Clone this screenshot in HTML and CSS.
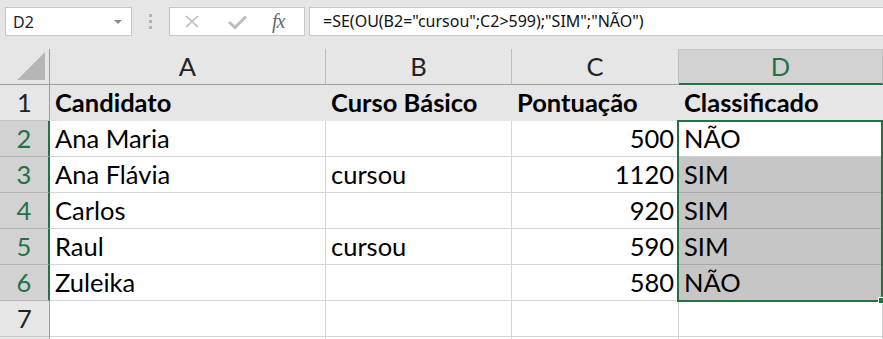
FILE: index.html
```html
<!DOCTYPE html>
<html lang="pt">
<head>
    <meta charset="UTF-8">
    <title>Planilha</title>
    <link rel="stylesheet" href="styles.css">
</head>
<body>
    <div class="toolbar">
        <div class="namebox"><span>D2</span><span class="caret"></span></div>
        <div class="grip"><i></i><i></i><i></i></div>
        <div class="fxbuttons">
            <svg class="ico" width="18" height="13" viewBox="0 0 18 13"><path d="M3 1 L15 12 M15 1 L3 12" stroke="#b9b9b9" stroke-width="1.6" fill="none"/></svg>
            <svg class="ico" width="19" height="14" viewBox="0 0 19 14"><path d="M1 7 L7 12.5 L18 1.5" stroke="#bcbcbc" stroke-width="3" fill="none"/></svg>
            <span class="fx">fx</span>
        </div>
        <div class="formula">=SE(OU(B2="cursou";C2&gt;599);"SIM";"NÃO")</div>
    </div>

    <div class="sheet">
        <div class="grid">
            <div class="corner"><svg width="30" height="30" viewBox="0 0 30 30"><polygon points="29,1 29,29 1,29" fill="#b5b5b5"/></svg></div>
            <div class="colhead">A</div>
            <div class="colhead">B</div>
            <div class="colhead">C</div>
            <div class="colhead active">D</div>

            <div class="rowhead">1</div>
            <div class="cell title">Candidato</div>
            <div class="cell title">Curso Básico</div>
            <div class="cell title">Pontuação</div>
            <div class="cell title">Classificado</div>

            <div class="rowhead active">2</div>
            <div class="cell">Ana Maria</div>
            <div class="cell"></div>
            <div class="cell num">500</div>
            <div class="cell current">NÃO</div>

            <div class="rowhead active">3</div>
            <div class="cell">Ana Flávia</div>
            <div class="cell">cursou</div>
            <div class="cell num">1120</div>
            <div class="cell picked">SIM</div>

            <div class="rowhead active">4</div>
            <div class="cell">Carlos</div>
            <div class="cell"></div>
            <div class="cell num">920</div>
            <div class="cell picked">SIM</div>

            <div class="rowhead active">5</div>
            <div class="cell">Raul</div>
            <div class="cell">cursou</div>
            <div class="cell num">590</div>
            <div class="cell picked">SIM</div>

            <div class="rowhead active">6</div>
            <div class="cell">Zuleika</div>
            <div class="cell"></div>
            <div class="cell num">580</div>
            <div class="cell picked">NÃO</div>

            <div class="rowhead">7</div>
            <div class="cell"></div>
            <div class="cell"></div>
            <div class="cell"></div>
            <div class="cell"></div>

            <div class="rowhead"></div>
            <div class="cell"></div>
            <div class="cell"></div>
            <div class="cell"></div>
            <div class="cell"></div>
        </div>
        <div class="selection"><span class="handle"></span></div>
    </div>
</body>
</html>
```

FILE: styles.css
```css
* {
    box-sizing: border-box;
}
html, body {
    margin: 0;
    padding: 0;
    overflow: hidden;
}
body {
    background: #e6e6e6;
    width: 883px;
    height: 339px;
    font-family: Lato, "Liberation Sans", sans-serif;
}
.toolbar {
    height: 49px;
    display: flex;
    align-items: flex-start;
    padding-top: 7px;
    padding-left: 5px;
    font-family: "Noto Sans", "Open Sans", sans-serif;
    font-size: 16px;
    color: #222;
}
.namebox {
    width: 127px;
    height: 29px;
    background: #fff;
    border: 1px solid #c6c6c6;
    display: flex;
    align-items: center;
    justify-content: space-between;
    padding: 0 9px 0 7px;
}
.caret {
    width: 0;
    height: 0;
    border-left: 4px solid transparent;
    border-right: 4px solid transparent;
    border-top: 4px solid #8a8a8a;
}
.grip {
    width: 37px;
    height: 29px;
    display: flex;
    flex-direction: column;
    align-items: center;
    justify-content: center;
    gap: 3px;
}
.grip i {
    width: 3px;
    height: 3px;
    background: #b3b3b3;
}
.fxbuttons {
    width: 136px;
    height: 29px;
    background: #fff;
    border: 1px solid #c6c6c6;
    display: flex;
    align-items: center;
    padding-left: 13px;
    gap: 27px;
}
.fx {
    font-family: "Liberation Serif", serif;
    font-style: italic;
    font-size: 20px;
    color: #6a6a6a;
    margin-left: -2px;
    letter-spacing: -1px;
}
.formula {
    margin-left: 4px;
    flex: 1;
    height: 29px;
    background: #fff;
    border: 1px solid #c6c6c6;
    border-right: none;
    padding-left: 13px;
    line-height: 27px;
    color: #111;
}
.sheet {
    position: relative;
    background: #fff;
}
.grid {
    display: grid;
    grid-template-columns: 50px 276px 186px 167px 204px;
    grid-auto-rows: 36px;
    font-size: 25.5px;
    line-height: 35px;
}
.corner {
    background: #e6e6e6;
    border-right: 1px solid #9e9e9e;
    border-bottom: 1px solid #9e9e9e;
    display: flex;
    align-items: flex-end;
    justify-content: flex-end;
    padding: 0 3px 3px 0;
}
.colhead {
    background: #e6e6e6;
    border-right: 1px solid #bdbdbd;
    border-bottom: 1px solid #9e9e9e;
    text-align: center;
    color: #222;
}
.colhead.active {
    background: #d2d2d2;
    color: #217346;
    border-bottom: 2px solid #217346;
    border-top: 1px solid #c6c6c6;
    line-height: 32px;
}
.rowhead {
    background: #e6e6e6;
    border-right: 1px solid #9e9e9e;
    border-bottom: 1px solid #c6c6c6;
    text-align: center;
    color: #222;
}
.rowhead.active {
    background: #d2d2d2;
    color: #217346;
    border-right: 2px solid #217346;
    border-bottom-color: #b5b5b5;
}
.cell {
    border-right: 1px solid #d4d4d4;
    border-bottom: 1px solid #d4d4d4;
    padding: 0 5px;
    color: #000;
    white-space: nowrap;
}
.cell.title {
    background: #e6e6e6;
    border-color: #e6e6e6;
    font-weight: bold;
}
.cell.num {
    text-align: right;
    padding-right: 4px;
}
.cell.picked {
    background: #c6c6c6;
    border-bottom-color: #a8a8a8;
}
.selection {
    position: absolute;
    left: 677px;
    top: 71px;
    width: 206px;
    height: 182px;
    border: 2px solid #217346;
}
.handle {
    position: absolute;
    right: -4px;
    bottom: -4px;
    width: 7px;
    height: 7px;
    background: #217346;
    border: 1px solid #fff;
}
```
